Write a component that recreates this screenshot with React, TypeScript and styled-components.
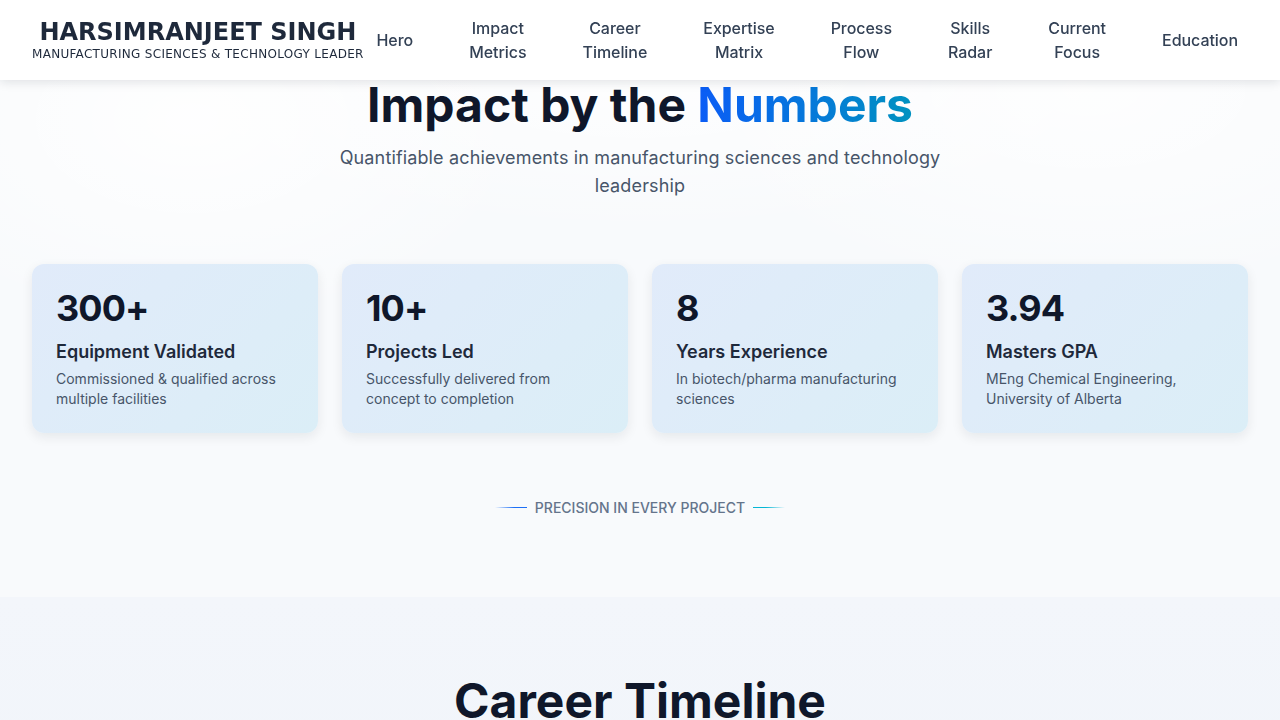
import React from "react";
import styled, { createGlobalStyle } from "styled-components";

const GlobalStyle = createGlobalStyle`
  * { box-sizing: border-box; }
  html, body { margin: 0; padding: 0; }
  body {
    font-family: "Inter", "Liberation Sans", sans-serif;
    background: #f8fafc;
    color: #0f172a;
    overflow: hidden;
  }
`;

const Header = styled.header`
  position: fixed;
  top: 0;
  left: 0;
  right: 0;
  height: 80px;
  z-index: 10;
  background: #ffffff;
  box-shadow: 0 2px 10px rgba(15, 23, 42, 0.12);
  display: flex;
  align-items: center;
  justify-content: space-between;
  padding: 0 32px;
`;

const Brand = styled.div`
  flex-shrink: 0;
  display: flex;
  flex-direction: column;
  align-items: center;
  font-family: "DejaVu Sans", sans-serif;
  color: #1e293b;
  white-space: nowrap;
`;

const BrandName = styled.div`
  font-size: 24px;
  font-weight: 700;
  line-height: 28px;
`;

const BrandTag = styled.div`
  font-size: 12px;
  line-height: 16px;
  letter-spacing: 0.3px;
  color: #1e293b;
`;

const Nav = styled.nav`
  display: flex;
  align-items: center;
  gap: 40px;
  padding-right: 2px;
`;

const NavItem = styled.a`
  display: block;
  width: min-content;
  padding: 0 8px;
  text-align: center;
  font-size: 16px;
  line-height: 24px;
  font-weight: 500;
  letter-spacing: -0.05px;
  color: #334155;
  text-decoration: none;
  cursor: pointer;
`;

const MetricsSection = styled.section`
  padding: 76px 32px 79px;
  background:
    radial-gradient(ellipse 500px 300px at 15% 20%, rgba(255, 255, 255, 0.9), transparent 70%),
    radial-gradient(ellipse 600px 300px at 85% 15%, rgba(255, 255, 255, 0.8), transparent 70%),
    radial-gradient(ellipse 700px 250px at 50% 10%, rgba(255, 255, 255, 0.9), transparent 70%),
    #f8fafc;
  display: flex;
  flex-direction: column;
  align-items: center;
`;

const Heading = styled.h2`
  margin: 0;
  font-size: 48px;
  line-height: 58px;
  font-weight: 700;
  color: #0f172a;
  text-align: center;
`;

const Accent = styled.span`
  background: linear-gradient(90deg, #0b5cf6 0%, #0092c0 100%);
  -webkit-background-clip: text;
  background-clip: text;
  color: transparent;
`;

const Lead = styled.p`
  margin: 10px 0 0;
  max-width: 680px;
  font-size: 18px;
  line-height: 28px;
  letter-spacing: 0.14px;
  color: #475569;
  text-align: center;
`;

const CardGrid = styled.div`
  margin-top: 64px;
  width: 100%;
  display: grid;
  grid-template-columns: repeat(4, 1fr);
  gap: 24px;
`;

const Card = styled.div`
  border-radius: 12px;
  padding: 24px;
  background: linear-gradient(135deg, #e1ebfa 0%, #dbeef7 100%);
  box-shadow: 0 4px 12px rgba(15, 23, 42, 0.08);
`;

const CardValue = styled.div`
  font-size: 36px;
  line-height: 40px;
  font-weight: 700;
  letter-spacing: -0.9px;
  color: #0f172a;
`;

const CardTitle = styled.div`
  margin-top: 10px;
  font-size: 18px;
  line-height: 28px;
  font-weight: 600;
  color: #1e293b;
`;

const CardDesc = styled.div`
  margin-top: 3px;
  font-size: 14px;
  line-height: 20px;
  color: #475569;
`;

const Tagline = styled.div`
  margin-top: 64px;
  display: flex;
  align-items: center;
  gap: 8px;
  font-size: 14px;
  line-height: 21px;
  font-weight: 500;
  color: #64748b;
  text-transform: uppercase;
`;

const Rule = styled.span<{ $side: "left" | "right" }>`
  display: block;
  width: 32px;
  height: 1px;
  background: ${(p) =>
    p.$side === "left"
      ? "linear-gradient(90deg, rgba(59, 130, 246, 0), #1d6ff5 60%)"
      : "linear-gradient(90deg, #06b6d4 40%, rgba(6, 182, 212, 0))"};
`;

const TimelineSection = styled.section`
  padding: 75px 32px 80px;
  background: linear-gradient(180deg, #f3f6fb 0%, #f1f5fa 100%);
  display: flex;
  flex-direction: column;
  align-items: center;
`;

const navItems = [
  "Hero",
  "Impact Metrics",
  "Career Timeline",
  "Expertise Matrix",
  "Process Flow",
  "Skills Radar",
  "Current Focus",
  "Education",
];

const metrics = [
  {
    value: "300+",
    title: "Equipment Validated",
    desc: "Commissioned & qualified across multiple facilities",
  },
  {
    value: "10+",
    title: "Projects Led",
    desc: "Successfully delivered from concept to completion",
  },
  {
    value: "8",
    title: "Years Experience",
    desc: "In biotech/pharma manufacturing sciences",
  },
  {
    value: "3.94",
    title: "Masters GPA",
    desc: "MEng Chemical Engineering, University of Alberta",
  },
];

export default function App() {
  return (
    <>
      <GlobalStyle />
      <Header>
        <Brand>
          <BrandName>HARSIMRANJEET SINGH</BrandName>
          <BrandTag>MANUFACTURING SCIENCES &amp; TECHNOLOGY LEADER</BrandTag>
        </Brand>
        <Nav>
          {navItems.map((item) => (
            <NavItem key={item}>{item}</NavItem>
          ))}
        </Nav>
      </Header>
      <main>
        <MetricsSection>
          <Heading>
            Impact by the <Accent>Numbers</Accent>
          </Heading>
          <Lead>
            Quantifiable achievements in manufacturing sciences and technology
            leadership
          </Lead>
          <CardGrid>
            {metrics.map((m) => (
              <Card key={m.title}>
                <CardValue>{m.value}</CardValue>
                <CardTitle>{m.title}</CardTitle>
                <CardDesc>{m.desc}</CardDesc>
              </Card>
            ))}
          </CardGrid>
          <Tagline>
            <Rule $side="left" />
            Precision in every project
            <Rule $side="right" />
          </Tagline>
        </MetricsSection>
        <TimelineSection>
          <Heading>Career Timeline</Heading>
        </TimelineSection>
      </main>
    </>
  );
}
